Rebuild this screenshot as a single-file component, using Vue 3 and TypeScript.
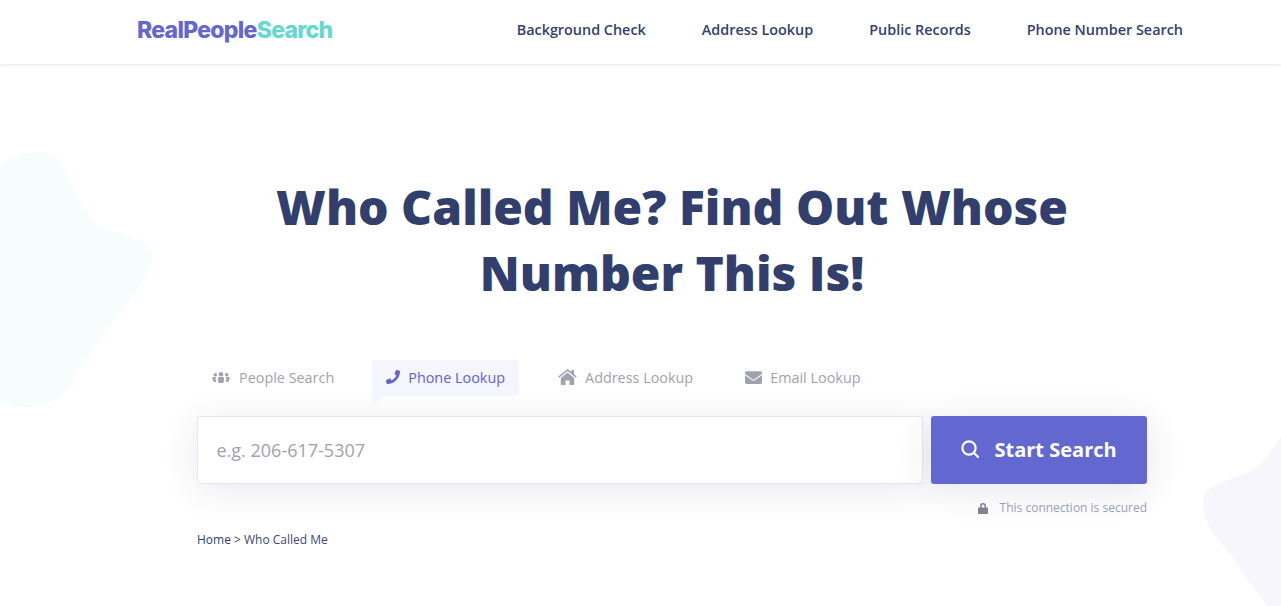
<script setup lang="ts">
const navLinks: string[] = ['Background Check', 'Address Lookup', 'Public Records', 'Phone Number Search']
</script>

<template>
  <div class="page">
    <svg class="blob blob-left" viewBox="0 0 153 256" aria-hidden="true">
      <path d="M0 14C11 6 24 1 35 1C48 1 58 6 64 17C72 31 80 56 96 72C108 82 122 81 136 88C147 93 152 98 152 106C152 118 146 126 138 137C130 148 120 161 110 174C102 186 92 198 84 210C76 224 70 238 56 248C46 254 36 256 26 256C16 256 8 253 0 249Z" />
    </svg>
    <svg class="blob blob-right" viewBox="0 0 78 172" aria-hidden="true">
      <path d="M78 3L78 172L65 172C52 156 40 140 30 123C22 112 0 94 0 71C0 58 6 54 14 50C28 44 38 42 48 37C62 30 68 16 78 3Z" />
    </svg>

    <header class="topbar">
      <div class="topbar-inner">
        <a class="logo"><span class="logo-a">RealPeople</span><span class="logo-b">Search</span></a>
        <nav class="nav">
          <a v-for="link in navLinks" :key="link" class="nav-link">{{ link }}</a>
        </nav>
      </div>
    </header>

    <main class="hero">
      <h1 class="title">Who Called Me? Find Out Whose<br />Number This Is!</h1>

      <div class="tabs">
        <div class="tab">
          <svg class="ic ic-users" viewBox="0 0 18 11"><circle cx="9" cy="2.300" r="2.300"/><path d="M6.600 11L5.800 7C5.700 5.800 6.300 5 7.300 5h3.400c1 0 1.600.8 1.500 2L11.400 11z"/><circle cx="3.300" cy="2.800" r="1.800"/><path d="M1.800 10L.3 6.800C.1 5.800.6 5 1.500 5h2.900c-.6.500-.9 1.200-.8 2.300L4.200 10z"/><circle cx="14.700" cy="2.800" r="1.800"/><path d="M16.200 10l1.500-3.200c.2-1-.3-1.800-1.200-1.800h-2.900c.6.500.9 1.200.8 2.300L13.800 10z"/></svg>
          <span>People Search</span>
        </div>
        <div class="tab active">
          <svg class="ic ic-phone" viewBox="0 0 512 512"><path d="M493.4 24.6l-104-24c-11.3-2.6-22.9 3.3-27.5 13.9l-48 112c-4.2 9.8-1.4 21.3 6.9 28l60.6 49.6c-36 76.7-98.9 140.5-177.2 177.2l-49.6-60.6c-6.8-8.3-18.2-11.1-28-6.9l-112 48C3.9 366.5-2 378.1.6 389.4l24 104C27.1 504.2 36.7 512 48 512c256.1 0 464-207.5 464-464 0-11.2-7.7-20.9-18.6-23.4z"/></svg>
          <span>Phone Lookup</span>
        </div>
        <div class="tab tab-after">
          <svg class="ic ic-home" viewBox="0 0 19 16"><path d="M9.5 3.4L2.8 9v6.2c0 .4.3.8.7.8h4V11.400h4V16h4c.4 0 .7-.4.7-.8V9z"/><path d="M18.800 7.500L16 5.200V1h-2.600v2L9.500 0 .2 7.500l1 1.200L9.500 2l8.300 6.700z"/></svg>
          <span>Address Lookup</span>
        </div>
        <div class="tab">
          <svg class="ic ic-mail" viewBox="0 0 512 384"><path transform="translate(0 -64)" d="M502.3 190.8c3.900-3.100 9.700-.2 9.700 4.700V400c0 26.500-21.500 48-48 48H48c-26.500 0-48-21.500-48-48V195.600c0-5 5.700-7.800 9.700-4.700 22.400 17.400 52.100 39.500 154.100 113.600 21.100 15.400 56.700 47.800 92.200 47.600 35.700.3 72-32.800 92.300-47.600 102-74.100 131.600-96.300 154-113.700zM256 320c23.200.4 56.600-29.200 73.400-41.400 132.700-96.300 142.800-104.700 173.400-128.700 5.800-4.500 9.200-11.500 9.200-18.900v-19c0-26.500-21.500-48-48-48H48C21.500 64 0 85.500 0 112v19c0 7.400 3.400 14.300 9.200 18.900 30.600 23.900 40.700 32.400 173.400 128.700 16.800 12.200 50.200 41.800 73.400 41.400z"/></svg>
          <span>Email Lookup</span>
        </div>
      </div>

      <form class="search" @submit.prevent>
        <input class="field" type="text" placeholder="e.g. 206-617-5307" />
        <button class="submit" type="submit">
          <svg class="ic-search" viewBox="0 0 18 18"><circle cx="8" cy="8" r="6.600"/><path d="M13 13L17 17"/></svg>
          <span>Start Search</span>
        </button>
      </form>

      <div class="secure">
        <svg class="ic-lock" viewBox="0 0 10 11"><path d="M2 4.500V3a3 3 0 0 1 6 0v1.500h1c.6 0 1 .4 1 1V10c0 .6-.4 1-1 1H1c-.6 0-1-.4-1-1V5.500c0-.6.400-1 1-1zm1.500 0h3V3a1.500 1.500 0 0 0-3 0z"/></svg>
        <span>This connection is secured</span>
      </div>

      <div class="crumbs"><a class="crumb-home">Home</a> &gt; Who Called Me</div>
    </main>
  </div>
</template>

<style>
html, body { margin: 0; background: #fff; overflow: hidden; }
</style>

<style scoped>
.page {
  position: relative;
  height: 606px;
  overflow: hidden;
  background: #fff;
  font-family: "Open Sans", "Liberation Sans", sans-serif;
}
.blob { position: absolute; }
.blob-left { left: 0; top: 151px; width: 153px; height: 256px; fill: #f6fdfc; }
.blob-right { right: 0; top: 434px; width: 78px; height: 172px; fill: #f6f6fc; }
.topbar {
  position: relative;
  height: 64px;
  background: #fff;
  box-shadow: 0 1px 3px rgba(40, 50, 90, 0.12);
}
.topbar-inner {
  height: 60px;
  padding: 0 98px 0 137px;
  display: flex;
  align-items: center;
  justify-content: space-between;
}
.logo {
  font-family: Inter, "Liberation Sans", sans-serif;
  font-size: 23px;
  font-weight: 800;
  letter-spacing: -0.72px;
}
.logo-a { color: #6467cf; }
.logo-b { color: #65d8d0; }
.nav { display: flex; gap: 56px; }
.nav-link {
  font-size: 14.4px;
  font-weight: 600;
  color: #353f6b;
  line-height: 20px;
}
.hero {
  position: relative;
  width: 950px;
  margin-left: 197px;
  padding-top: 110px;
}
.title {
  margin: 0;
  text-align: center;
  font-size: 48px;
  line-height: 66px;
  font-weight: 800;
  color: #323f6d;
}
.tabs {
  display: flex;
  gap: 24px;
  margin-top: 54px;
  padding-left: 1px;
}
.tab {
  position: relative;
  box-sizing: border-box;
  height: 36px;
  padding: 0 14px 2px;
  display: flex;
  align-items: center;
  gap: 8px;
  font-size: 14.4px;
  color: #a0a3ad;
  border-radius: 3px;
}
.tab-after { margin-left: 1px; }
.ic { fill: currentColor; flex: none; }
.ic-users { width: 18px; height: 11px; margin-right: 1px; }
.ic-phone { width: 14px; height: 14px; }
.ic-home { width: 19px; height: 16px; }
.ic-mail { width: 17px; height: 13px; }
.tab.active {
  background: #f4f5fd;
  color: #6064cd;
}
.tab.active::after {
  content: "";
  position: absolute;
  left: 0;
  top: 100%;
  border-top: 10px solid #f4f5fd;
  border-right: 11px solid transparent;
}
.search {
  display: flex;
  gap: 8px;
  margin-top: 20px;
  height: 68px;
}
.field {
  flex: 1;
  min-width: 0;
  box-sizing: border-box;
  height: 68px;
  padding: 0 18.500px;
  border: 1px solid #e6e6f0;
  border-radius: 3px;
  background: #fff;
  font: 400 18px "Open Sans", sans-serif;
  color: #333;
  outline: none;
  box-shadow: 0 6px 36px rgba(40, 45, 90, 0.1);
}
.field::placeholder { color: #a0a3ad; opacity: 1; }
.submit {
  box-sizing: border-box;
  width: 216px;
  height: 68px;
  border: 0;
  border-radius: 3px;
  padding: 0 0 2px 29.500px;
  background: #6268cf;
  color: #fff;
  display: flex;
  align-items: center;
  gap: 16px;
  font: 700 20px "Open Sans", sans-serif;
  box-shadow: 0 6px 36px rgba(40, 45, 90, 0.12);
}
.ic-search {
  width: 18px;
  height: 18px;
  fill: none;
  stroke: #fff;
  stroke-width: 2.200;
  stroke-linecap: round;
  overflow: visible;
}
.secure {
  display: flex;
  justify-content: flex-end;
  align-items: center;
  gap: 11.500px;
  margin-top: 15px;
  font-size: 12px;
  line-height: 18px;
  color: #9a9fb6;
}
.ic-lock { width: 10px; height: 11px; fill: #7f8490; }
.crumbs {
  margin-top: 14px;
  font-size: 12px;
  line-height: 18px;
  color: #3e4870;
}
.crumb-home { color: #323f6d; }
</style>
